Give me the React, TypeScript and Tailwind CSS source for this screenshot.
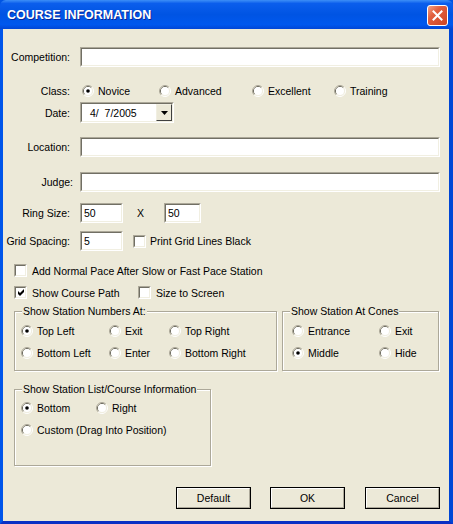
import type { ReactNode } from "react";

/**
 * Course Information dialog (XP Luna frame, classic controls).
 */

function Sunken({ className = "", children }: { className?: string; children?: ReactNode }) {
  return (
    <div className={`border border-t-[#aca899] border-l-[#aca899] border-b-white border-r-white ${className}`}>
      <div className="h-full w-full border border-t-[#716f64] border-l-[#716f64] border-b-[#f1efe2] border-r-[#f1efe2] bg-white flex items-center">
        {children}
      </div>
    </div>
  );
}

function RadioMark({ checked }: { checked?: boolean }) {
  return (
    <svg width="12" height="12" viewBox="0 0 12 12" className="shrink-0">
      <path d="M2.11 9.89A5.5 5.5 0 0 1 9.89 2.11" fill="none" stroke="#aca899" />
      <path d="M9.89 2.11A5.5 5.5 0 0 1 2.11 9.89" fill="none" stroke="#ffffff" />
      <path d="M2.82 9.18A4.5 4.5 0 0 1 9.18 2.82" fill="none" stroke="#716f64" />
      <path d="M9.18 2.82A4.5 4.5 0 0 1 2.82 9.18" fill="none" stroke="#f1efe2" />
      <circle cx="6" cy="6" r="4" fill="#ffffff" />
      {checked && <circle cx="6" cy="6" r="1.8" fill="#000000" />}
    </svg>
  );
}

function Radio({ label, checked, className = "" }: { label: string; checked?: boolean; className?: string }) {
  return (
    <div className={`flex items-center h-[14px] shrink-0 ${className}`}>
      <RadioMark checked={checked} />
      <span className="ml-[4px] pt-[2px] whitespace-nowrap">{label}</span>
    </div>
  );
}

function Check({ label, checked, className = "" }: { label: string; checked?: boolean; className?: string }) {
  return (
    <div className={`flex items-center h-[13px] shrink-0 ${className}`}>
      <Sunken className="w-[13px] h-[13px] shrink-0">
        {checked && (
          <svg width="7" height="7" viewBox="0 0 7 7" className="ml-[2px]">
            <path d="M0 2L2 4L6 0L6 3L2 7L0 5Z" fill="#000" />
          </svg>
        )}
      </Sunken>
      <span className="ml-[5px] pt-[2px] whitespace-nowrap">{label}</span>
    </div>
  );
}

function Group({ legend, className = "", children }: { legend: string; className?: string; children?: ReactNode }) {
  return (
    <div
      className={`relative shrink-0 border border-[#aca899] shadow-[inset_1px_1px_0_#fff,1px_1px_0_#fff] ${className}`}
    >
      <span className="absolute top-[-8px] left-[7px] px-[1px] bg-[#ece9d8] leading-[14px] whitespace-nowrap">
        {legend}
      </span>
      {children}
    </div>
  );
}

function Button({ label, className = "" }: { label: string; className?: string }) {
  return (
    <div className={`h-[22px] w-[75px] border border-black shrink-0 ${className}`}>
      <div className="h-full w-full pt-[1px] border border-t-white border-l-white border-b-[#aca899] border-r-[#aca899] flex items-center justify-center">
        {label}
      </div>
    </div>
  );
}

function Label({ text, className = "w-[67px]" }: { text: string; className?: string }) {
  return <span className={`text-right pt-[2px] shrink-0 whitespace-nowrap ${className}`}>{text}</span>;
}

export default function App() {
  return (
    <div className="w-[453px] h-[524px] flex flex-col bg-[#0054e3] font-['Liberation_Sans',Arial,sans-serif] text-[10.5px] text-black overflow-hidden">
      {/* Title bar */}
      <div className="relative h-[29px] shrink-0 flex items-center pl-[7px] pt-[2px] rounded-t-[6px] bg-[linear-gradient(to_bottom,#3d8ff7_0%,#0b5eec_12%,#0054e3_50%,#0058ee_85%,#0246d6_100%)]">
        <span className="text-white font-bold text-[12.5px] [text-shadow:1px_1px_0_#0b2595]">COURSE INFORMATION</span>
        <div className="absolute right-[5px] top-[5px] w-[21px] h-[21px] rounded-[3px] border border-white flex items-center justify-center bg-[linear-gradient(135deg,#f2a487_0%,#e2603f_35%,#cc4424_100%)]">
          <svg width="11" height="11" viewBox="0 0 11 11">
            <path d="M1.5 1.5L9.5 9.5M9.5 1.5L1.5 9.5" stroke="#fff" strokeWidth="2" strokeLinecap="square" />
          </svg>
        </div>
      </div>

      {/* Body */}
      <div className="flex-1 flex flex-col bg-[#ece9d8] border-l-[3px] border-r-[4px] border-b-[3px] border-l-[#0055ea] border-r-[#0046d5] border-b-[#0a2fc4]">
        <div className="mt-[18px] h-[20px] flex items-center">
          <Label text="Competition:" />
          <Sunken className="ml-[10px] w-[360px] h-[20px]" />
        </div>

        <div className="mt-[16px] h-[16px] flex items-center">
          <Label text="Class:" />
          <div className="ml-[12px] flex items-center">
            <Radio label="Novice" checked className="w-[77px]" />
            <Radio label="Advanced" className="w-[93px]" />
            <Radio label="Excellent" className="w-[82px]" />
            <Radio label="Training" />
          </div>
        </div>

        <div className="mt-[3px] h-[21px] flex items-center">
          <Label text="Date:" />
          <Sunken className="ml-[10px] w-[94px] h-[21px]">
            <span className="pl-[8px] pt-[2px]">4/&nbsp;&nbsp;7/2005</span>
            <div className="ml-auto h-full w-[16px] border border-t-[#f1efe2] border-l-[#f1efe2] border-b-[#404040] border-r-[#404040] bg-[#ece9d8] flex items-center justify-center">
              <svg width="7" height="4" viewBox="0 0 7 4">
                <path d="M0 0H7L3.5 4Z" fill="#000" />
              </svg>
            </div>
          </Sunken>
        </div>

        <div className="mt-[14px] h-[20px] flex items-center">
          <Label text="Location:" />
          <Sunken className="ml-[10px] w-[360px] h-[20px]" />
        </div>

        <div className="mt-[15px] h-[20px] flex items-center">
          <Label text="Judge:" className="w-[70px]" />
          <Sunken className="ml-[7px] w-[360px] h-[20px]" />
        </div>

        <div className="mt-[11px] h-[20px] flex items-center">
          <Label text="Ring Size:" />
          <Sunken className="ml-[10px] w-[43px] h-[20px]">
            <span className="pl-[2px] pt-[2px]">50</span>
          </Sunken>
          <span className="w-[41px] pl-[14px] pt-[2px]">X</span>
          <Sunken className="w-[37px] h-[20px]">
            <span className="pl-[2px] pt-[2px]">50</span>
          </Sunken>
        </div>

        <div className="mt-[8px] h-[20px] flex items-center">
          <Label text="Grid Spacing:" />
          <Sunken className="ml-[10px] w-[43px] h-[20px]">
            <span className="pl-[2px] pt-[2px]">5</span>
          </Sunken>
          <Check label="Print Grid Lines Black" className="ml-[10px] [&>span]:ml-[4px]" />
        </div>

        <div className="mt-[13px] h-[13px] flex items-center pl-[11px]">
          <Check label="Add Normal Pace After Slow or Fast Pace Station" />
        </div>

        <div className="mt-[9px] h-[13px] flex items-center pl-[11px]">
          <Check label="Show Course Path" checked className="w-[124px]" />
          <Check label="Size to Screen" />
        </div>

        <div className="mt-[12px] flex pl-[11px]">
          <Group legend="Show Station Numbers At:" className="w-[263px] h-[60px]">
            <div className="pt-[12px] pl-[6px] flex flex-col gap-[8px]">
              <div className="flex">
                <Radio label="Top Left" checked className="w-[88px]" />
                <Radio label="Exit" className="w-[60px]" />
                <Radio label="Top Right" />
              </div>
              <div className="flex">
                <Radio label="Bottom Left" className="w-[88px]" />
                <Radio label="Enter" className="w-[60px]" />
                <Radio label="Bottom Right" />
              </div>
            </div>
          </Group>
          <Group legend="Show Station At Cones" className="ml-[5px] w-[157px] h-[60px]">
            <div className="pt-[12px] pl-[9px] flex flex-col gap-[8px]">
              <div className="flex">
                <Radio label="Entrance" className="w-[87px]" />
                <Radio label="Exit" />
              </div>
              <div className="flex">
                <Radio label="Middle" checked className="w-[87px]" />
                <Radio label="Hide" />
              </div>
            </div>
          </Group>
        </div>

        <div className="mt-[18px] flex pl-[11px]">
          <Group legend="Show Station List/Course Information" className="w-[197px] h-[77px]">
            <div className="pt-[11px] pl-[6px] flex flex-col gap-[8px]">
              <div className="flex">
                <Radio label="Bottom" checked className="w-[75px]" />
                <Radio label="Right" />
              </div>
              <div className="flex">
                <Radio label="Custom (Drag Into Position)" />
              </div>
            </div>
          </Group>
        </div>

        <div className="mt-[21px] flex pl-[173px]">
          <Button label="Default" />
          <Button label="OK" className="ml-[19px]" />
          <Button label="Cancel" className="ml-[20px]" />
        </div>
      </div>
    </div>
  );
}
